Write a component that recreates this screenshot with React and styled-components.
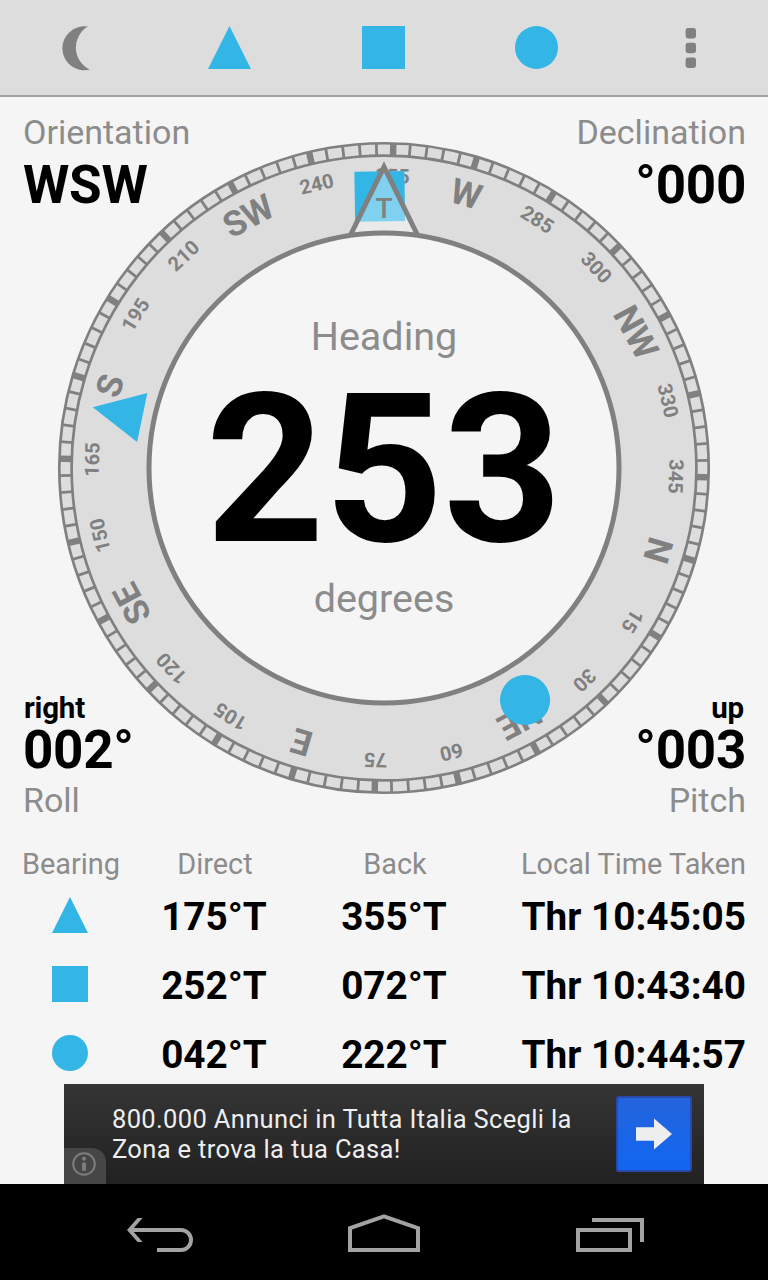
import React from 'react';
import styled, { createGlobalStyle } from 'styled-components';

const BLUE = '#33b5e5';
const GREY = '#808080';
const HEADING = 253.35;

const majors = Array.from({ length: 24 }, (_, i) => i * 15);
const minors = Array.from({ length: 120 }, (_, i) => i * 3).filter((d) => d % 15 !== 0);
const points = { 0: 'N', 45: 'NE', 90: 'E', 135: 'SE', 180: 'S', 225: 'SW', 270: 'W', 315: 'NW' };

const bearings = [
  { shape: 'triangle', direct: '175°T', back: '355°T', time: 'Thr 10:45:05' },
  { shape: 'square', direct: '252°T', back: '072°T', time: 'Thr 10:43:40' },
  { shape: 'circle', direct: '042°T', back: '222°T', time: 'Thr 10:44:57' },
];

const Shape = ({ kind, size }) => (
  <svg width={size} height={size} viewBox="0 0 36 36" fill={BLUE}>
    {kind === 'triangle' && <path d="M18 0L36 36H0Z" />}
    {kind === 'square' && <rect width="36" height="36" />}
    {kind === 'circle' && <circle cx="18" cy="18" r="18" />}
  </svg>
);

const Compass = () => (
  <Dial viewBox="-327 -327 654 654">
    <circle r="280" fill="none" stroke="#ddd" strokeWidth="90" />
    <g transform={`rotate(${-HEADING})`}>
      <circle r="324.7" fill="none" stroke={GREY} strokeWidth="2.7" />
      <circle r="312.4" fill="none" stroke={GREY} strokeWidth="2.7" />
      {minors.map((d) => (
        <line key={d} y1="-325" y2="-312" stroke={GREY} strokeWidth="2.8" transform={`rotate(${d})`} />
      ))}
      {majors.map((d) => (
        <g key={d} transform={`rotate(${d})`}>
          <line y1="-325" y2="-312" stroke={GREY} strokeWidth="6.4" />
          {points[d] ? (
            <PointLabel y="-274">{points[d]}</PointLabel>
          ) : (
            <DegreeLabel y="-285">{d}</DegreeLabel>
          )}
        </g>
      ))}
    </g>
    <g fill={BLUE}>
      <path d="M0 -297.5L25 -247H-25Z" transform="rotate(-78.2)" />
      <rect x="-25" y="-296.6" width="50" height="50" transform="rotate(-0.9)" />
      <circle cy="-271.5" r="25" transform="rotate(148.7)" />
    </g>
    <path d="M-33.5 -233L0 -301L33.5 -233" fill="#fff" fillOpacity="0.38" stroke={GREY} strokeWidth="5" />
    <PointerLabel y="-250.3">T</PointerLabel>
    <circle r="235" fill="#f5f5f5" stroke={GREY} strokeWidth="5" />
  </Dial>
);

const App = () => {
  return (
    <Screen>
      <GlobalStyle />
      <TopBar>
        <BarItem>
          <svg width="48" height="48" viewBox="1.6 0 48 48" fill={GREY}>
            <path d="M36.5 2.6A22 22 0 1 0 38.5 45.6A24.3 24.3 0 0 1 36.5 2.6Z" />
          </svg>
        </BarItem>
        <BarItem><Shape kind="triangle" size={43} /></BarItem>
        <BarItem><Shape kind="square" size={43} /></BarItem>
        <BarItem><Shape kind="circle" size={43} /></BarItem>
        <BarItem>
          <svg width="14" height="42" viewBox="-2 0 14 42" fill={GREY}>
            <rect x="0.6" y="1" width="10.4" height="10.4" rx="2.4" />
            <rect x="0.6" y="15.8" width="10.4" height="10.4" rx="2.4" />
            <rect x="0.6" y="30.6" width="10.4" height="10.4" rx="2.4" />
          </svg>
        </BarItem>
      </TopBar>

      <Stage>
        <Corner>
          <Label>Orientation</Label>
          <Reading>WSW</Reading>
        </Corner>
        <Corner $right>
          <Label>Declination</Label>
          <Reading>°000</Reading>
        </Corner>
        <Corner $bottom>
          <Direction>right</Direction>
          <Reading>002°</Reading>
          <Label>Roll</Label>
        </Corner>
        <Corner $right $bottom>
          <Direction>up</Direction>
          <Reading>°003</Reading>
          <Label>Pitch</Label>
        </Corner>
        <Center $drop={3}>
          <Compass />
        </Center>
        <Center $drop={4}>
          <HeadingText>Heading</HeadingText>
          <HeadingValue>253</HeadingValue>
          <HeadingText>degrees</HeadingText>
        </Center>
      </Stage>

      <Table>
        <HeadRow>
          <span>Bearing</span>
          <span>Direct</span>
          <span>Back</span>
          <span>Local Time Taken</span>
        </HeadRow>
        {bearings.map((b) => (
          <Row key={b.shape}>
            <Shape kind={b.shape} size={36} />
            <span>{b.direct}</span>
            <span>{b.back}</span>
            <span>{b.time}</span>
          </Row>
        ))}
      </Table>

      <Ad>
        <InfoTab>
          <svg width="24" height="24" viewBox="0 0 24 24">
            <circle cx="12" cy="12" r="10.8" fill="none" stroke="#7d7d7d" strokeWidth="2" />
            <circle cx="12" cy="6.8" r="2" fill="#7d7d7d" />
            <rect x="10" y="10.4" width="4" height="8.6" rx="1.4" fill="#7d7d7d" />
          </svg>
        </InfoTab>
        <AdText>
          800.000 Annunci in Tutta Italia Scegli la
          <br />
          Zona e trova la tua Casa!
        </AdText>
        <AdButton>
          <svg width="36" height="32" viewBox="0 0 36 32" fill="#eee">
            <path d="M0 9.3H18V0.4L36 16L18 31.6V22.7H0Z" />
          </svg>
        </AdButton>
      </Ad>

      <NavBar>
        <svg width="72" height="40" viewBox="124 1214 72 40">
          <path d="M127 1230L137.6 1218H142.6L132 1230L142.6 1242H137.6Z" fill="#a3a3a3" />
          <path d="M131 1230H181A10 10 0 0 1 181 1250H157" />
        </svg>
        <svg width="72" height="40" viewBox="348 1214 72 40">
          <path d="M350 1228.2L384 1216.3L418 1228.2V1250H350Z" />
        </svg>
        <svg width="72" height="40" viewBox="572 1214 72 40">
          <rect x="578" y="1230" width="52" height="20" />
          <path d="M592 1220H642V1242" />
        </svg>
      </NavBar>
    </Screen>
  );
};

const GlobalStyle = createGlobalStyle`
  body {
    margin: 0;
    background: #f5f5f5;
  }

  svg {
    display: block;
  }
`;

const Screen = styled.div`
  width: 768px;
  height: 1280px;
  display: flex;
  flex-direction: column;
  overflow: hidden;
  background: #f5f5f5;
  font-family: Roboto, sans-serif;
  color: #000;
`;

const TopBar = styled.div`
  height: 95px;
  padding-right: 1.5px;
  display: grid;
  grid-template-columns: repeat(5, 1fr);
  background: #ddd;
  border-bottom: 2px solid #a3a3a3;
`;

const BarItem = styled.div`
  display: flex;
  align-items: center;
  justify-content: center;
`;

const Stage = styled.div`
  height: 741px;
  box-sizing: border-box;
  padding: 15px 22px 18px;
  display: grid;
  grid-template: 1fr 1fr / 1fr 1fr;
`;

const Label = styled.div`
  font-size: 34px;
  line-height: 40px;
  color: #8c8c8c;
`;

const Corner = styled.div`
  grid-column: ${(p) => (p.$right ? 2 : 1)};
  grid-row: ${(p) => (p.$bottom ? 2 : 1)};
  align-self: ${(p) => (p.$bottom ? 'end' : 'start')};
  text-align: ${(p) => (p.$right ? 'right' : 'left')};
  padding-left: 1px;

  ${Label}:last-child {
    margin-top: -1px;
  }
`;

const Reading = styled.div`
  padding-top: 2px;
  font-size: 53px;
  line-height: 62px;
  font-weight: 700;
  letter-spacing: -0.3px;
`;

const Direction = styled.div`
  margin-bottom: -3px;
  padding: 0 2px 0 1px;
  font-size: 29.5px;
  line-height: 24px;
  font-weight: 700;
  letter-spacing: -0.2px;
`;

const Center = styled.div`
  grid-area: 1 / 1 / 3 / 3;
  display: flex;
  flex-direction: column;
  align-items: center;
  justify-content: center;
  padding-top: ${(p) => p.$drop}px;
`;

const Dial = styled.svg`
  width: 654px;
  height: 654px;
  text-anchor: middle;
`;

const PointLabel = styled.text`
  font-size: 35px;
  font-weight: 700;
  letter-spacing: -0.5px;
  fill: ${GREY};
`;

const DegreeLabel = styled.text`
  font-size: 20px;
  font-weight: 700;
  fill: ${GREY};
`;

const PointerLabel = styled.text`
  font-size: 28px;
  font-weight: 500;
  fill: ${GREY};
`;

const HeadingText = styled.div`
  font-size: 39.5px;
  line-height: 48px;
  color: #8c8c8c;
`;

const HeadingValue = styled.div`
  padding-top: 5px;
  font-size: 207px;
  line-height: 209px;
  font-weight: 700;
`;

const Table = styled.div`
  height: 246px;
  box-sizing: border-box;
  padding: 4px 22px 0;
`;

const Row = styled.div`
  display: grid;
  grid-template-columns: 96px 192px 168px 1fr;
  align-items: center;
  justify-items: center;
  height: 60px;
  margin-bottom: 9px;
  font-size: 38.7px;
  font-weight: 700;
  white-space: nowrap;

  & > svg {
    margin-bottom: 2px;
  }

  & > :last-child {
    justify-self: end;
  }
`;

const HeadRow = styled(Row)`
  height: 44px;
  margin-bottom: 0;
  padding-left: 1px;
  font-size: 28.9px;
  font-weight: 400;
  color: #8c8c8c;
`;

const Ad = styled.div`
  width: 640px;
  height: 100px;
  flex-shrink: 0;
  align-self: center;
  display: flex;
  align-items: center;
  background: linear-gradient(#353535, #212121);
`;

const InfoTab = styled.div`
  width: 42px;
  height: 36px;
  box-sizing: border-box;
  align-self: flex-end;
  padding: 4px 0 0 8px;
  background: #464646;
  border-top-right-radius: 14px;
`;

const AdText = styled.div`
  flex: 1;
  padding-left: 6px;
  font-size: 25.5px;
  line-height: 30px;
  letter-spacing: 0.34px;
  color: #eee;
  white-space: nowrap;
`;

const AdButton = styled.div`
  width: 76px;
  height: 76px;
  box-sizing: border-box;
  margin-right: 12px;
  display: flex;
  align-items: center;
  justify-content: center;
  background: linear-gradient(#2364dc, #1266f1);
  border: 2px solid #2a48ac;
  border-radius: 3px;
`;

const NavBar = styled.div`
  height: 96px;
  flex-shrink: 0;
  box-sizing: border-box;
  padding: 4px 0 0 124px;
  display: flex;
  align-items: center;
  gap: 152px;
  background: #000;

  svg {
    fill: none;
    stroke: #a3a3a3;
    stroke-width: 4;
  }

  path[fill] {
    fill: #a3a3a3;
    stroke: none;
  }
`;

export default App;
